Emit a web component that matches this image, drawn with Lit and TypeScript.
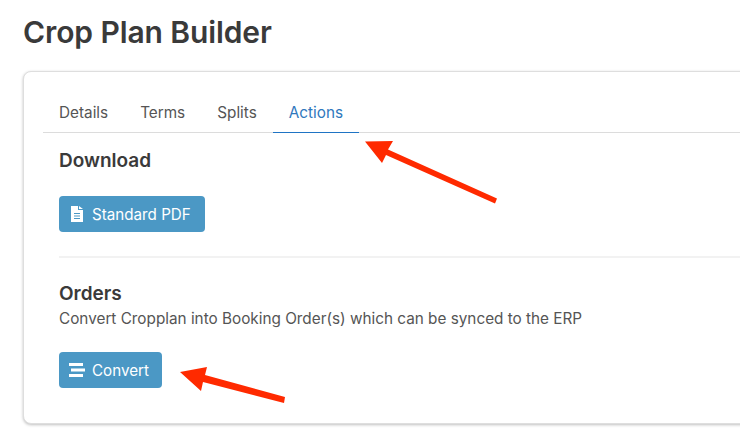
import { LitElement, html, css, svg } from "lit";
import { customElement } from "lit/decorators.js";

@customElement("app-root")
export class AppRoot extends LitElement {
  static styles = css`
    :host { display: block; position: relative; width: 740px; height: 440px; overflow: hidden; background: #fff; font-family: Inter, "Liberation Sans", sans-serif; color: #3c3c3c; }
    .page { padding: 13px 0 0 23px; width: 860px; box-sizing: border-box; }
    h1 { margin: 0 0 19px; font-size: 30px; line-height: 39px; font-weight: 600; color: #3a3a3a; letter-spacing: -0.1px; }
    .card { height: 353px; box-sizing: border-box; padding: 20px 19px 0; border: 1px solid #dedede; border-radius: 8px; box-shadow: 0 1px 3px rgba(0,0,0,.25); background: #fff; }
    .tabs { display: flex; border-bottom: 1px solid #dcdcdc; height: 41px; box-sizing: border-box; }
    .tab { padding: 0 16px; font-size: 15.3px; line-height: 41px; color: #555; height: 41px; box-sizing: border-box; }
    .tab.active { color: #2f78bd; border-bottom: 1px solid #1f74c4; }
    .body { padding: 0 16px; }
    h2 { margin: 0; font-size: 19px; font-weight: 600; line-height: 24px; color: #3a3a3a; }
    .dl { padding-top: 16px; }
    .btn { display: inline-flex; align-items: center; gap: 7px; height: 36px; padding: 0 14px 0 10px; box-sizing: border-box; background: #4b98c5; color: #fff; border-radius: 4px; font-size: 15.2px; }
    .dl .btn { margin-top: 23px; }
    hr { margin: 24px 0 0; border: 0; border-top: 2px solid #f2f2f2; }
    .orders { padding-top: 24px; }
    p { margin: 1px 0 0; font-size: 15.3px; line-height: 24px; color: #555; }
    .orders .btn { margin-top: 21px; padding-right: 13px; }
    .arrows { position: absolute; left: 0; top: 0; pointer-events: none; }
    svg { display: block; }
  `;

  render() {
    return html`
      <div class="page">
        <h1>Crop Plan Builder</h1>
        <div class="card">
          <div class="tabs">
            <div class="tab">Details</div>
            <div class="tab">Terms</div>
            <div class="tab">Splits</div>
            <div class="tab active">Actions</div>
          </div>
          <div class="body">
            <div class="dl">
              <h2>Download</h2>
              <div class="btn">
                <svg width="16" height="16" viewBox="0 0 16 16"><path fill="#fff" fill-rule="evenodd" d="M2 0h7v4h5v12H2zM10 0l4 3h-4zM5 7v1h6V7zM5 9.500v1h6v-1zM5 12v1h6v-1z"/></svg>
                <span>Standard PDF</span>
              </div>
            </div>
            <hr />
            <div class="orders">
              <h2>Orders</h2>
              <p>Convert Cropplan into Booking Order(s) which can be synced to the ERP</p>
              <div class="btn">
                <svg width="16" height="14" viewBox="0 0 16 14"><path fill="#fff" d="M0 0h14v3H0zM2 5.500h14v3H2zM0 11h14v3H0z"/></svg>
                <span>Convert</span>
              </div>
            </div>
          </div>
        </div>
      </div>
      <svg class="arrows" width="740" height="440" viewBox="0 0 740 440">
        ${svg`<path fill="#ff2a00" d="M365 141.500 393 141 388 149.500 497 198.500 495 203.500 386 155 382 163z"/>
        <path fill="#ff2a00" d="M180 372 207 367 205 375 285 397 284 403 203 382 201 391z"/>`}
      </svg>
    `;
  }
}
